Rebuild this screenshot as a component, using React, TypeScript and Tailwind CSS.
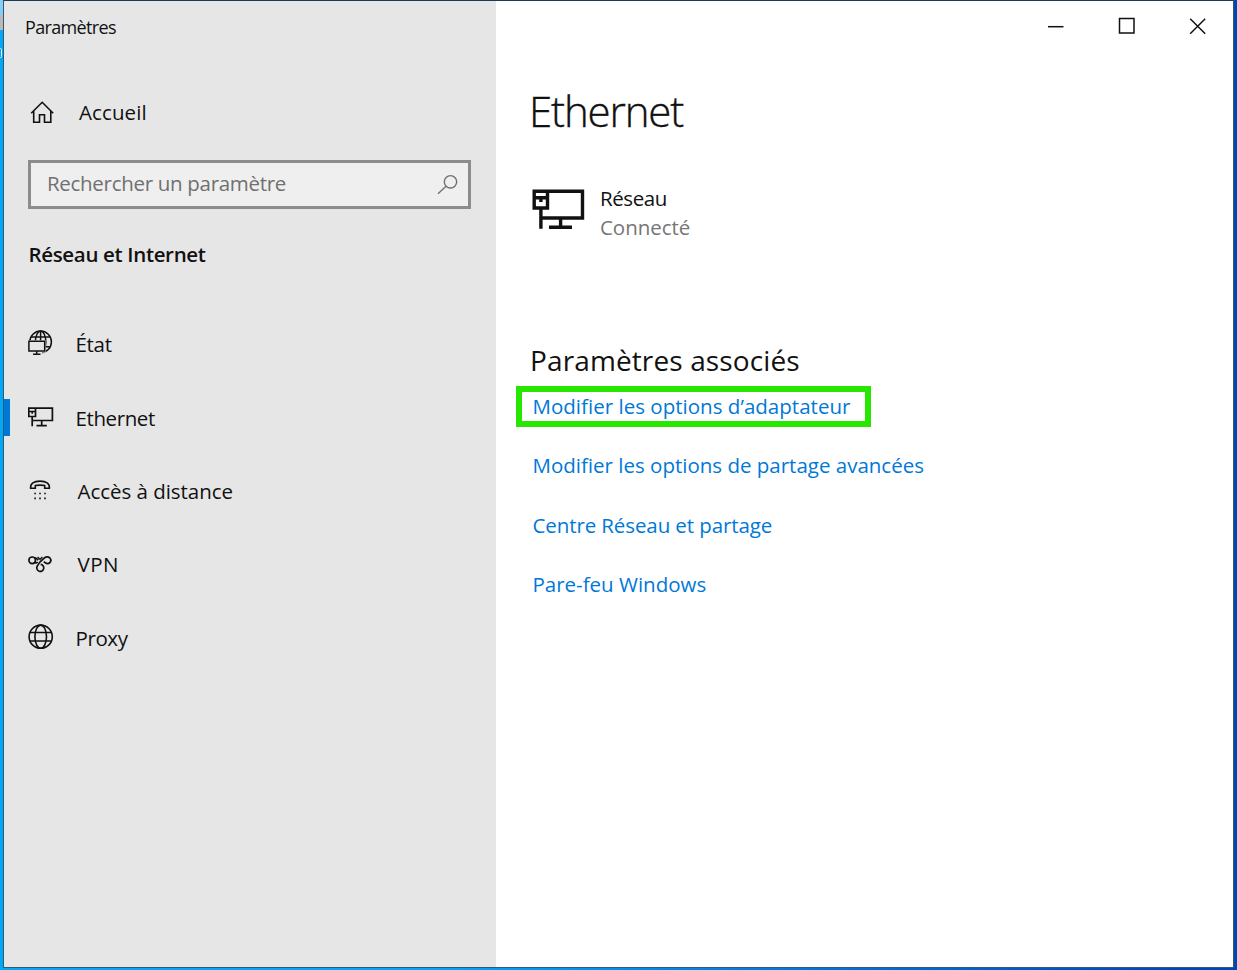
import type { ReactNode } from "react";

function Icon({ w, h, sw = 1.5, className = "", children }: { w: number; h: number; sw?: number; className?: string; children: ReactNode }) {
  return (
    <svg width={w} height={h} viewBox={`0 0 ${w} ${h}`} fill="none" stroke="currentColor" strokeWidth={sw} className={`block shrink-0 ${className}`}>
      {children}
    </svg>
  );
}

const StatusIcon = () => (
  <Icon w={26} h={30} sw={1.5}>
    <circle cx="12.600" cy="12.900" r="10.800" />
    <ellipse cx="12.600" cy="12.900" rx="5.200" ry="10.800" />
    <path d="M3 8.100h19.200M3 17.700h19.200M12.600 2.100v10" />
    <path d="M0 11.200h17.700v12.300H14v3H0z" fill="#e6e6e6" stroke="none" />
    <path d="M.9 12.200h15.800v9.900H.9zM8.700 22.100v3M5 25.300h7.500" />
  </Icon>
);
const EthernetIcon = () => (
  <Icon w={26} h={30} sw={1.7}>
    <path d="M7.500 5.200H24.400V17.500H4.200M.8 5.200h6.700v8.300H.8zM.8 8.500h6.700M4.200 8.500v2.300M4.200 13.500v9.800M13.700 17.500v5M8.500 22.700h10.300" />
  </Icon>
);
const DialIcon = () => (
  <Icon w={26} h={30}>
    <path d="M2.600 12.300C2.200 7.500 5.700 5.100 12 5.100s9.800 2.400 9.400 7.200h-4.700V9.600C15 8.900 9 8.900 7.300 9.600v2.700z" strokeWidth={1.6} />
    <path d="M6.300 17.500h1.600M11.200 17.500h1.600M16.200 17.500h1.600M6.300 22.300h1.600M11.200 22.300h1.600M16.200 22.300h1.600" strokeWidth={1.7} />
  </Icon>
);
const VpnIcon = () => (
  <Icon w={26} h={30} sw={1.7}>
    <circle cx="4.200" cy="11.300" r="3.300" />
    <path d="M6.500 8.900c1.600-.4 2.700.8 3.800 2.200M6.500 13.700c1.300.6 2.300.2 3.200-.7" />
    <path d="M12.600 15.400a3.500 3.500 0 1 1-3.500 2c1.400-3 4.400-6.400 6.900-8.200 1.800-1.300 4.200-1.600 5.900-.2a3.300 3.300 0 0 1-2.400 5.600c-1.900.1-2.700-1.100-3.700-1.900" />
    <path d="M9.600 8l2.400 2.300L14.400 8" strokeWidth={1.2} />
  </Icon>
);
const GlobeIcon = () => (
  <Icon w={26} h={30} sw={1.6}>
    <circle cx="12.700" cy="13.700" r="11.600" />
    <ellipse cx="12.700" cy="13.700" rx="5.800" ry="11.600" />
    <path d="M2 9.500h21.500M2 18h21.500" />
  </Icon>
);

const nav = [
  { label: "État", icon: <StatusIcon />, cls: "ml-[21.5px] tracking-[-0.3px]" },
  { label: "Ethernet", icon: <EthernetIcon />, cls: "ml-[21.5px] tracking-[-0.4px]", active: true },
  { label: "Accès à distance", icon: <DialIcon />, cls: "ml-[23.5px] tracking-[-0.03px]" },
  { label: "VPN", icon: <VpnIcon />, cls: "ml-[23.5px] tracking-[0.5px]" },
  { label: "Proxy", icon: <GlobeIcon />, cls: "ml-[21.5px] tracking-[-0.4px]" },
];

const links = [
  { label: "Modifier les options de partage avancées", cls: "tracking-[0px]" },
  { label: "Centre Réseau et partage", cls: "tracking-[-0.1px]" },
  { label: "Pare-feu Windows", cls: "tracking-[0px]" },
];

function Sidebar() {
  return (
    <aside className="flex w-[491.5px] shrink-0 flex-col bg-[#e6e6e6]">
      <div className="mt-[13px] ml-[21px] h-[26px] text-[18px] leading-[26px] tracking-[-0.65px]">Paramètres</div>
      <div className="mt-[58px] ml-[25px] flex h-[30px] items-center">
        <Icon w={26} h={30} sw={1.6}>
          <path d="M2.200 15.300L13.200 4.300l11 11M4.700 13v11.200h5.800v-7.500h5v7.500h6.300V13" />
        </Icon>
        <span className="-mt-0.5 ml-6 tracking-[0.1px]">Accueil</span>
      </div>
      <div className="mt-8 ml-6 flex h-[49px] w-[443px] items-center justify-between border-[3px] border-[#8c8c8c] bg-[#efefef] pr-[10px] pl-4 text-[#707070]">
        <span className="-mt-1 tracking-[-0.3px]">Rechercher un paramètre</span>
        <Icon w={21} h={22} sw={1.4}>
          <circle cx="13.500" cy="7.800" r="6.200" />
          <path d="M9 12.200L1 19.800" />
        </Icon>
      </div>
      <div className="mt-[30px] ml-[24.5px] h-[30px] font-semibold leading-[30px] tracking-[-0.34px]">Réseau et Internet</div>
      <nav className="mt-[38.5px]">
        {nav.map((n) => (
          <div key={n.label} className="flex h-[73.35px] items-center">
            <span className={n.active ? "h-[37px] w-[6px] bg-[#0078d7]" : "w-[6px]"} />
            <span className="ml-[18px]">{n.icon}</span>
            <span className={n.cls}>{n.label}</span>
          </div>
        ))}
      </nav>
    </aside>
  );
}

export default function App() {
  return (
    <div className="flex h-[970px] w-[1237px] overflow-hidden bg-linear-to-r from-[#00a8f8] from-35% to-[#0047b5] to-95% font-['Open_Sans','Noto_Sans',sans-serif] text-[20.5px] leading-[30px] text-[#111]">
      <div className="w-[3px] shrink-0 overflow-hidden">
        <div className="h-[15px] bg-[#83cff5]" />
        <div className="h-[15px] bg-[#b9b9b9]" />
        <div className="mt-[18px] ml-[-1px] h-[10px] w-[3px] rounded-full border border-[#d5efff]" />
      </div>
      <div className="flex h-[968px] w-[1231px] shrink-0 border border-[#38566e] border-t-[#1c3c55] bg-white">
        <Sidebar />
        <main className="flex grow flex-col">
          <div className="flex h-[50px] items-center justify-end gap-[54px] pr-[27px]">
            <Icon w={17} h={18} sw={1.5}><path d="M1 9.700h15.500" /></Icon>
            <Icon w={17} h={18} sw={1.5}><path d="M1.500 1.500h14.500v14.500H1.500z" /></Icon>
            <Icon w={17} h={18} sw={1.5}><path d="M1.200 1.700l15 15M16.200 1.700l-15 15" /></Icon>
          </div>
          <h1 className="mt-[30px] ml-[33.5px] h-[60px] text-[42px] font-light leading-[60px] tracking-[-1.15px] [-webkit-text-stroke:0.35px_#111]">Ethernet</h1>
          <div className="mt-[43px] ml-[36.5px] flex h-[58px]">
            <Icon w={54} h={50} sw={3.400} className="mt-[3px]">
              <path d="M16 4.200H50.500V31H9.300M2.200 4.200h13.300V21H2.200zM2.200 10.800h13.300" />
              <path d="M8.900 11v4M8.900 21v20.700M28.600 31v9.500M17 40.200h23" />
            </Icon>
            <div className="ml-[14px] leading-[29px]">
              <div className="tracking-[-0.4px]">Réseau</div>
              <div className="tracking-[-0.05px] text-[#767676]">Connecté</div>
            </div>
          </div>
          <h2 className="mt-[97px] ml-[34.5px] h-[42px] text-[28px] leading-[42px] tracking-[0.12px]">Paramètres associés</h2>
          <a className="mt-[5px] ml-[20.5px] h-[41px] w-[355px] border-[6px] border-[#28e600] pl-[10.5px] leading-[29px] whitespace-nowrap text-[#0078d7] tracking-[0.02px]">Modifier les options d’adaptateur</a>
          <div className="mt-[9px] ml-[37px] text-[#0078d7]">
            {links.map((l) => (
              <a key={l.label} className={`block h-[59.5px] leading-[59.5px] ${l.cls}`}>{l.label}</a>
            ))}
          </div>
        </main>
      </div>
    </div>
  );
}
